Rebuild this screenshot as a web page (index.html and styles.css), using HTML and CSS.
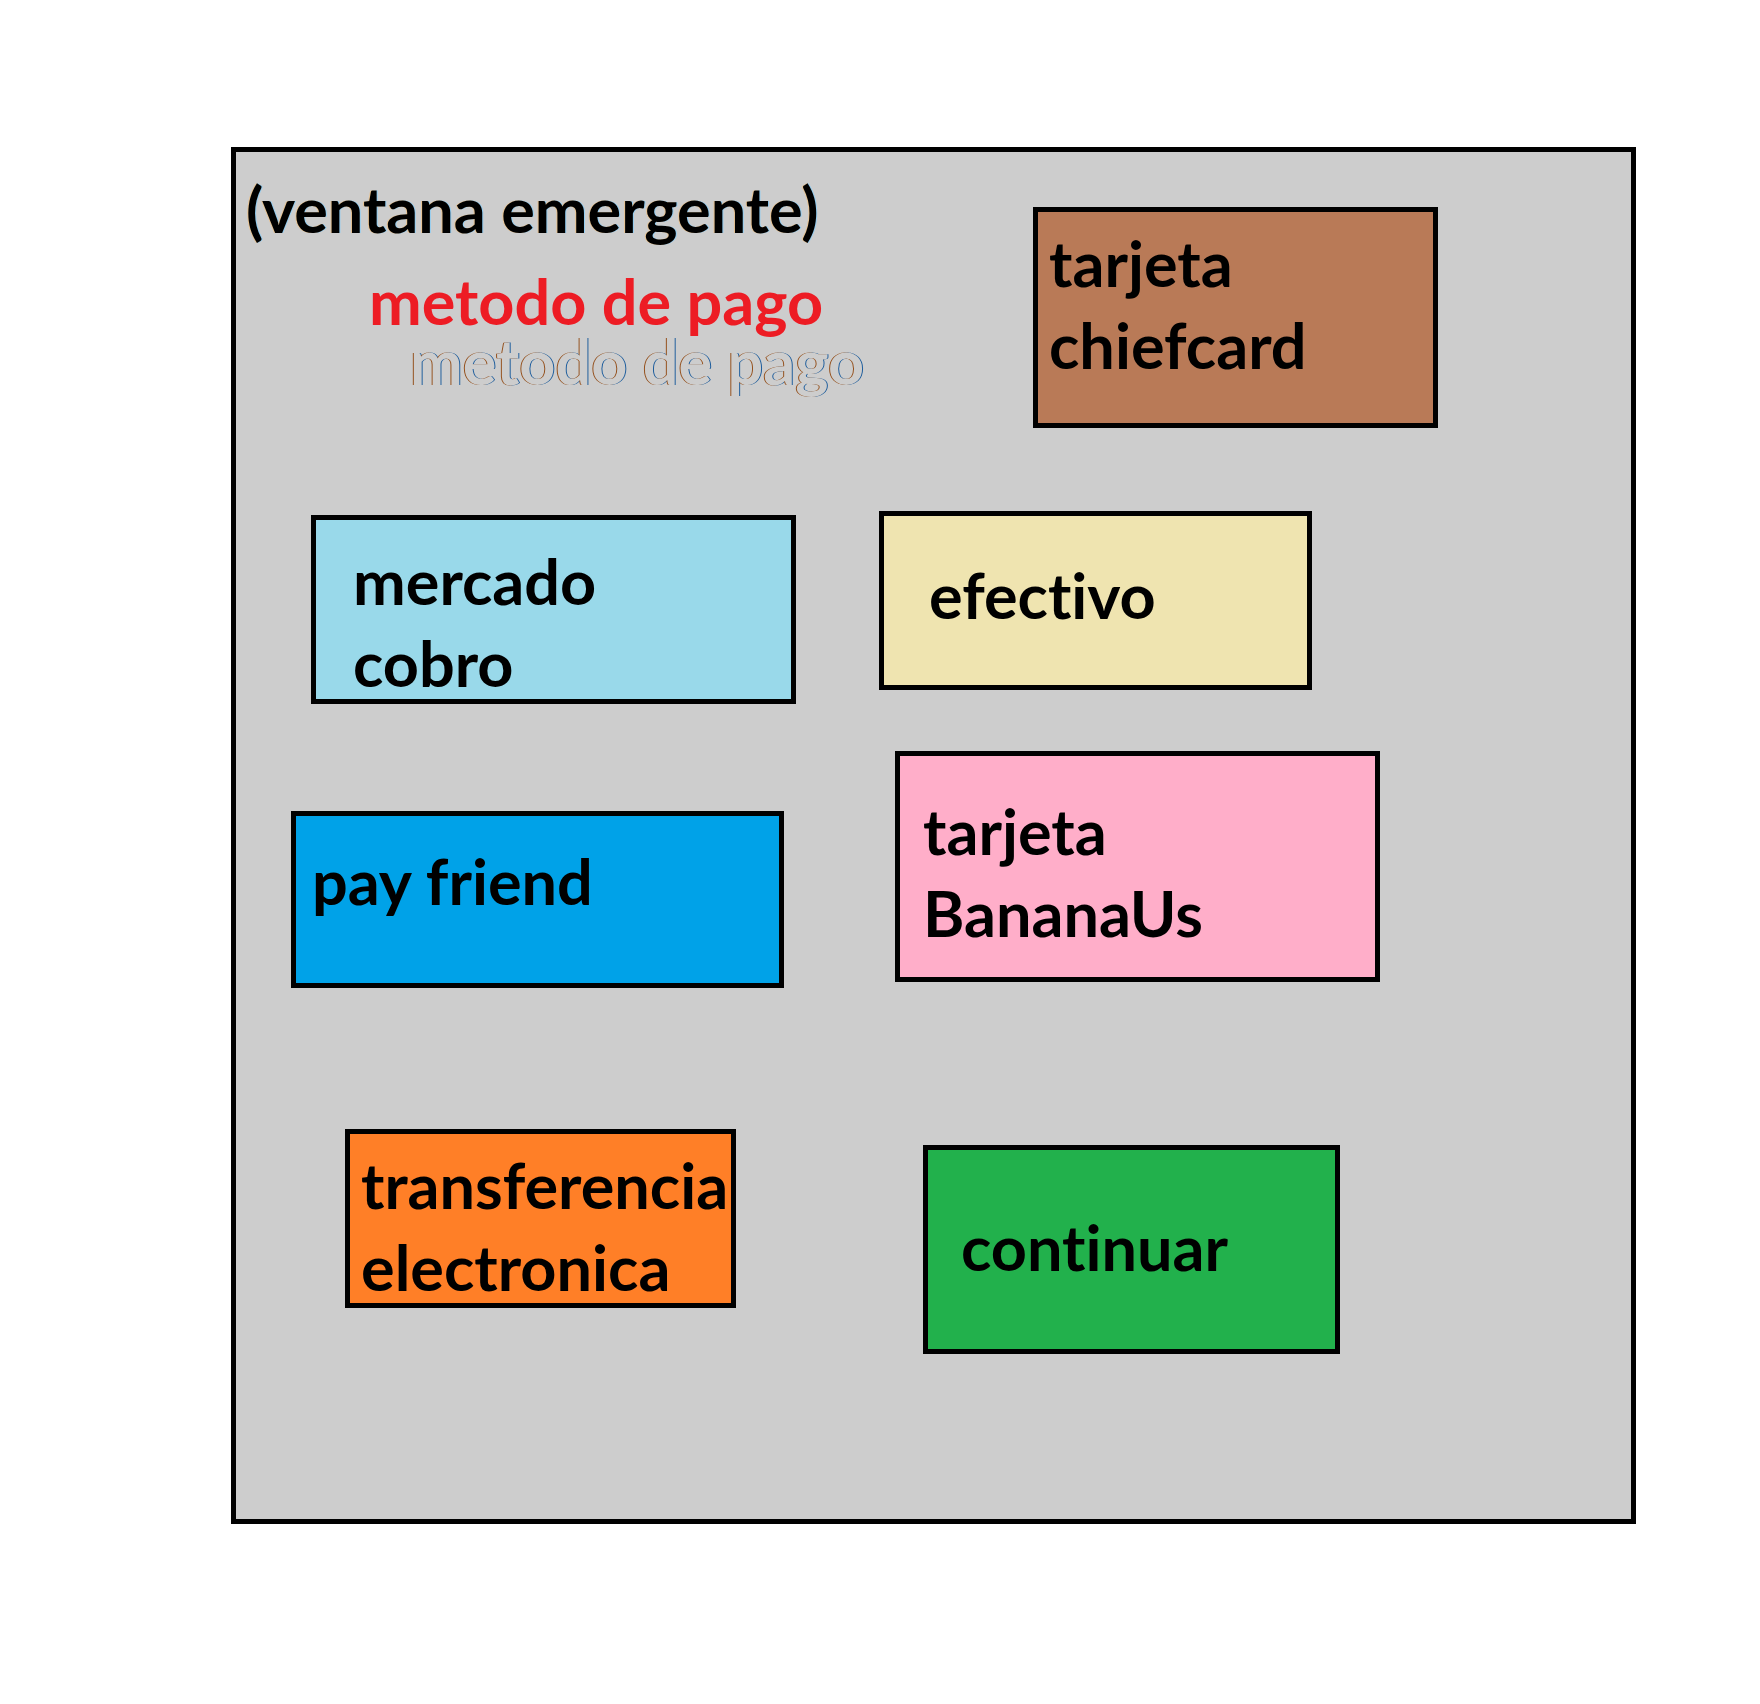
FILE: index.html
```html
<!DOCTYPE html>
<html lang="es">
<head>
<meta charset="utf-8">
<title>Metodo de pago</title>
<link rel="stylesheet" href="styles.css">
</head>
<body>
<main class="dialog">
  <section class="column">
    <header class="heading">
      <p class="note">(ventana emergente)</p>
      <h1 class="title">metodo de pago</h1>
      <p class="echo">metodo de pago</p>
    </header>
    <button type="button" class="option mercado"><span>mercado</span><span>cobro</span></button>
    <button type="button" class="option friend"><span>pay friend</span></button>
    <button type="button" class="option transfer"><span>transferencia</span><span>electronica</span></button>
  </section>
  <section class="column">
    <button type="button" class="option chiefcard"><span>tarjeta</span><span>chiefcard</span></button>
    <button type="button" class="option cash"><span>efectivo</span></button>
    <button type="button" class="option banana"><span>tarjeta</span><span>BananaUs</span></button>
    <button type="button" class="option continue"><span>continuar</span></button>
  </section>
</main>
</body>
</html>
```

FILE: styles.css
```css
* {
  box-sizing: border-box;
}

body {
  margin: 0;
  background: #fff;
  color: #000;
  font: bold 63px/56px Lato, sans-serif;
  font-variant-ligatures: none;
}

.dialog {
  display: grid;
  grid-template-columns: 4fr 5fr;
  margin: 147px 124px 180px 231px;
  border: 5px solid #000;
  background: #cdcdcd;
}

.column {
  display: flex;
  flex-direction: column;
  min-width: 0;
  padding-bottom: 165px;
}

.heading {
  padding-top: 29px;
  white-space: nowrap;
}

.note,
.title,
.echo {
  margin: 0;
  font: inherit;
  font-variant-ligatures: none;
}

.note {
  padding-left: 10px;
  text-shadow: -1px 0 #e6c394, 1px 0 #94cdf0;
}

.title {
  margin-top: 36px;
  padding-left: 133px;
  color: #ed1c24;
}

.echo {
  margin-top: 4px;
  padding-left: 174px;
  color: #cdcdcd;
  text-shadow: -1px 0 #94501c, 1px 0 #1c5c9c;
}

.option {
  display: flex;
  flex-direction: column;
  align-items: flex-start;
  gap: 26px;
  border: 5px solid #000;
  border-radius: 0;
  color: inherit;
  font: inherit;
  font-variant-ligatures: none;
  text-align: left;
  white-space: nowrap;
  cursor: pointer;
}

.mercado {
  margin: 126px 60px 0 75px;
  padding: 33px 0 8px 37px;
  background: #99d9ea;
}

.friend {
  margin: 107px 72px 0 55px;
  padding: 37px 0 74px 16px;
  background: #00a2e8;
}

.transfer {
  margin: 141px 120px 0 109px;
  padding: 23px 0 8px 11px;
  background: #ff7f27;
}

.chiefcard {
  margin: 55px 193px 0 177px;
  padding: 23px 0 50px 11px;
  background: #b97a57;
}

.cash {
  margin: 83px 319px 0 23px;
  padding: 51px 0 62px 45px;
  background: #efe4b0;
}

.banana {
  margin: 61px 251px 0 39px;
  padding: 47px 0 36px 23px;
  background: #ffaec9;
}

.continue {
  margin: 163px 291px 0 67px;
  padding: 69px 0 74px 33px;
  background: #22b14c;
}
```
